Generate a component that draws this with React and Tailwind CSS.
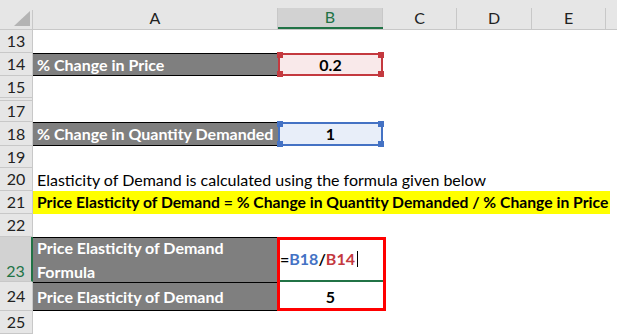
import React from "react";

const cols = [
  { l: "A", w: "w-[245px]" },
  { l: "B", w: "w-[105px]" },
  { l: "C", w: "w-[74px]" },
  { l: "D", w: "w-[75px]" },
  { l: "E", w: "w-[74px]" },
];

function RowHead({ n, h, active }) {
  return (
    <div
      className={`w-[33px] shrink-0 flex justify-center border-b border-[#c8c8c8] ${
        active
          ? "bg-[#d2d2d2] text-[#217346] border-r-2 border-r-[#217346] items-end pb-[2px]"
          : "bg-[#e6e6e6] text-[#222] border-r border-r-[#c8c8c8] items-center"
      } ${h}`}
    >
      {n}
    </div>
  );
}

function Handle({ pos, color }) {
  return <div className={`absolute w-[6px] h-[6px] ${pos} ${color}`} />;
}

function RefCell({ value, tone }) {
  const red = tone === "red";
  const border = red ? "border-[#c4393f]" : "border-[#4472c4]";
  const fill = red ? "bg-[#f9e9ea]" : "bg-[#e8eef9]";
  const hc = red ? "bg-[#c4393f]" : "bg-[#4472c4]";
  return (
    <div className={`relative w-[105px] h-full border-2 ${border} ${fill} flex items-center justify-center font-bold text-black`}>
      {value}
      <Handle pos="-left-[3px] -top-[3px]" color={hc} />
      <Handle pos="-left-[3px] -bottom-[3px]" color={hc} />
      <Handle pos="-right-[3px] -top-[3px]" color={hc} />
      <Handle pos="-right-[3px] -bottom-[3px]" color={hc} />
    </div>
  );
}

function DarkCell({ children, extra = "" }) {
  return (
    <div className={`w-[245px] h-full bg-[#7f7f7f] text-white font-bold pl-[4px] flex items-center border-y border-black whitespace-nowrap ${extra}`}>
      {children}
    </div>
  );
}

export default function App() {
  return (
    <div className="relative w-[617px] h-[335px] overflow-hidden bg-white font-[Lato,sans-serif] text-[16px] leading-none text-black">
      {/* column header */}
      <div className="flex h-[30px] bg-[#e6e6e6] border-b border-[#c8c8c8]">
        <div className="w-[33px] shrink-0 flex">
          <div className="flex-1 flex items-end justify-end pb-[3px] pr-[2px]">
            <svg width="16" height="15" viewBox="0 0 16 15">
              <polygon points="16,0 16,15 0,15" fill="#b4b4b4" />
            </svg>
          </div>
          <div className="w-[1px] self-end h-[19px] bg-[#c8c8c8]" />
        </div>
        {cols.map((c) => (
          <div key={c.l} className={`${c.w} shrink-0 flex flex-col`}>
            <div className="h-[8px]" />
            <div
              className={`flex-1 flex ${
                c.l === "B" ? "bg-[#d2d2d2] border-b-2 border-[#217346] text-[#217346]" : "text-[#222]"
              }`}
            >
              <div className="flex-1 flex items-center justify-center pb-[1px]">{c.l}</div>
              <div className="w-[1px] h-full bg-[#c8c8c8]" />
            </div>
          </div>
        ))}
        <div className="flex-1" />
      </div>

      {/* 13 */}
      <div className="flex h-[23px]">
        <RowHead n={13} h="h-[23px]" />
      </div>
      {/* 14 */}
      <div className="flex h-[23px]">
        <RowHead n={14} h="h-[23px]" />
        <DarkCell>% Change in Price</DarkCell>
        <RefCell value="0.2" tone="red" />
      </div>
      {/* 15 */}
      <div className="flex h-[22px]">
        <RowHead n={15} h="h-[22px]" />
      </div>
      {/* hidden 16 */}
      <div className="flex h-[3px]">
        <RowHead n="" h="h-[3px]" />
      </div>
      {/* 17 */}
      <div className="flex h-[21px]">
        <RowHead n={17} h="h-[21px]" />
      </div>
      {/* 18 */}
      <div className="flex h-[24px]">
        <RowHead n={18} h="h-[24px]" />
        <DarkCell>% Change in Quantity Demanded</DarkCell>
        <RefCell value="1" tone="blue" />
      </div>
      {/* 19 */}
      <div className="flex h-[22px]">
        <RowHead n={19} h="h-[22px]" />
      </div>
      {/* 20 */}
      <div className="flex h-[23px]">
        <RowHead n={20} h="h-[23px]" />
        <div className="flex-1 flex items-center pl-[4px] whitespace-nowrap">
          Elasticity of Demand is calculated using the formula given below
        </div>
      </div>
      {/* 21 */}
      <div className="flex h-[23px]">
        <RowHead n={21} h="h-[23px]" />
        <div className="w-[577px] bg-[#ffff00] flex items-center pl-[4px] font-bold whitespace-nowrap text-[15.7px]">
          Price Elasticity of Demand = % Change in Quantity Demanded / % Change in Price
        </div>
      </div>
      {/* 22 */}
      <div className="flex h-[23px]">
        <RowHead n={22} h="h-[23px]" />
      </div>
      {/* 23 */}
      <div className="flex h-[45px]">
        <RowHead n={23} h="h-[45px]" active />
        <div className="w-[245px] h-full bg-[#7f7f7f] text-white font-bold pl-[4px] flex flex-col justify-center gap-[8px] border-t border-black">
          <span>Price Elasticity of Demand</span>
          <span>Formula</span>
        </div>
        <div className="w-[105px] h-full border-b-2 border-[#217346] flex items-center font-bold pl-[2px]">
          <span className="text-black">=</span>
          <span className="text-[#4472c4]">B18</span>
          <span className="text-black">/</span>
          <span className="text-[#c4393f]">B14</span>
          <span className="ml-[2px] w-[1px] h-[16px] bg-black" />
        </div>
      </div>
      {/* 24 */}
      <div className="flex h-[29px]">
        <RowHead n={24} h="h-[29px]" />
        <DarkCell>Price Elasticity of Demand</DarkCell>
        <div className="w-[105px] h-full flex items-center justify-center font-bold">5</div>
      </div>
      {/* 25 */}
      <div className="flex h-[23px]">
        <RowHead n={25} h="h-[23px]" />
      </div>

      {/* red annotation box */}
      <div className="absolute left-[277px] top-[237px] w-[109px] h-[74px] border-[3px] border-[#ff0000] pointer-events-none" />
    </div>
  );
}
